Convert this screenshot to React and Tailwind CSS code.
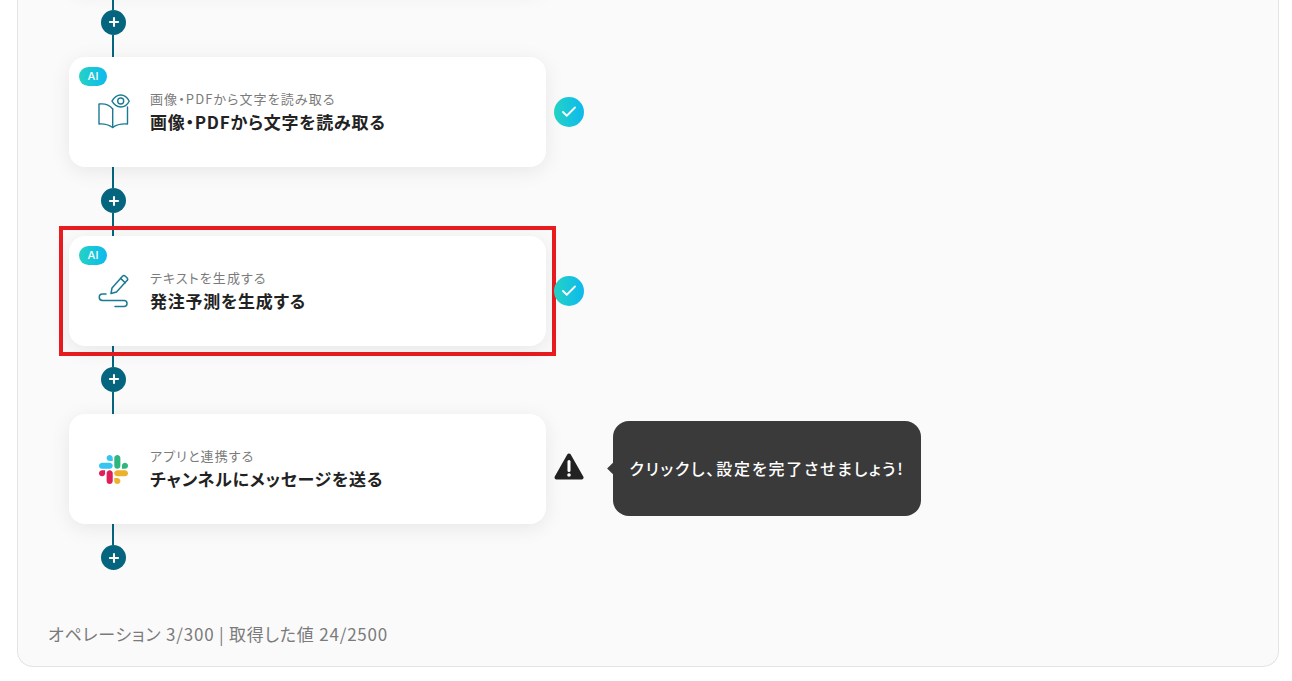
import { Check, Plus } from 'lucide-react';

const BookEyeIcon = () => (
  <svg width="32" height="35" viewBox="0 0 32 35" fill="none" stroke="#1b7a93" strokeWidth="1.4" strokeLinejoin="round" strokeLinecap="round">
    <path d="M14.7 15C12 11.5 7 9.3 1 10V30C7 29.5 11 31 14.7 33.5C18 31 23 29.5 29.5 30V13" />
    <path d="M14.7 15V33.5" />
    <path d="M14 7.2C16 3.5 19 1 22.7 1C26.4 1 29.4 3.5 31.2 7.2C29.4 10.7 26.4 13 22.7 13C19 13 16 10.7 14 7.2Z" fill="#fff" />
    <circle cx="22.7" cy="7" r="3" />
  </svg>
);

const PenIcon = () => (
  <svg width="32" height="35" viewBox="0 0 32 35" fill="none" stroke="#1b7a93" strokeWidth="1.5" strokeLinejoin="round" strokeLinecap="round">
    <path d="M13 20.5L14 15L24.5 3.2A2 2 0 0 1 27.3 3.2L29 4.8A2 2 0 0 1 29 7.6L18.5 19Z" />
    <path d="M22.6 5.4L27.2 9.8" />
    <path d="M8 21H4.5A3.2 3.2 0 0 0 4.5 27.5H26A3 3 0 0 1 26 33.5H17" />
  </svg>
);

const SlackIcon = () => (
  <svg width="29" height="29" viewBox="0 0 122.8 122.8" className="mt-[2px] -ml-[1px]">
    <path fill="#E01E5A" d="M25.8 77.6c0 7.1-5.8 12.9-12.9 12.9S0 84.7 0 77.6s5.8-12.9 12.9-12.9h12.9v12.9z" />
    <path fill="#E01E5A" d="M32.3 77.6c0-7.1 5.8-12.9 12.9-12.9s12.9 5.8 12.9 12.9v32.3c0 7.1-5.8 12.9-12.9 12.9s-12.9-5.8-12.9-12.9V77.6z" />
    <path fill="#36C5F0" d="M45.2 25.8c-7.1 0-12.9-5.8-12.9-12.9S38.1 0 45.2 0s12.9 5.8 12.9 12.9v12.9H45.2z" />
    <path fill="#36C5F0" d="M45.2 32.3c7.1 0 12.9 5.8 12.9 12.9s-5.8 12.9-12.9 12.9H12.9C5.8 58.1 0 52.3 0 45.2s5.8-12.9 12.9-12.9h32.3z" />
    <path fill="#2EB67D" d="M97 45.2c0-7.1 5.8-12.9 12.9-12.9s12.9 5.8 12.9 12.9-5.8 12.9-12.9 12.9H97V45.2z" />
    <path fill="#2EB67D" d="M90.5 45.2c0 7.1-5.8 12.9-12.9 12.9s-12.9-5.8-12.9-12.9V12.9C64.7 5.8 70.5 0 77.6 0s12.9 5.8 12.9 12.9v32.3z" />
    <path fill="#ECB22E" d="M77.6 97c7.1 0 12.9 5.8 12.9 12.9s-5.8 12.9-12.9 12.9-12.9-5.8-12.9-12.9V97h12.9z" />
    <path fill="#ECB22E" d="M77.6 90.5c-7.1 0-12.9-5.8-12.9-12.9s5.8-12.9 12.9-12.9h32.3c7.1 0 12.9 5.8 12.9 12.9s-5.8 12.9-12.9 12.9H77.6z" />
  </svg>
);

const WarningIcon = () => (
  <svg width="30" height="30" viewBox="0 0 30 30">
    <path d="M15 3.5L27.5 25.5H2.5Z" fill="#222" stroke="#222" strokeWidth="4" strokeLinejoin="round" />
    <path d="M15 9.5V18.5" stroke="#fff" strokeWidth="3" strokeLinecap="round" />
    <circle cx="15" cy="23" r="1.8" fill="#fff" />
  </svg>
);

// linea vertical + boton de agregar entre pasos
const Connector = ({ last = false }) => (
  <div className="ml-[32px] flex h-[68.5px] w-[25px] flex-col">
    <div className="ml-[11px] h-[21px] w-[2px] bg-[#05657f]" />
    <div className="flex h-[25px] w-[25px] shrink-0 items-center justify-center rounded-full bg-[#05657f]">
      <Plus size={14} strokeWidth={3.5} className="text-white" />
    </div>
    {!last && <div className="ml-[11px] flex-1 w-[2px] bg-[#05657f]" />}
  </div>
);

const AiBadge = () => (
  <span className="absolute left-[10px] top-[10px] flex h-[19px] w-[28px] items-center justify-center rounded-full bg-gradient-to-r from-[#25d2c3] to-[#0fb9ee] font-['Inter',sans-serif] text-[11px] font-medium leading-none text-white">
    AI
  </span>
);

const StepCard = ({ icon, label, title, ai, selected }) => (
  <div className="relative">
    {selected && (
      <div className="absolute -left-[10px] -right-[10px] -top-[10px] -bottom-[10px] border-4 border-[#e81c1f]" />
    )}
    <div className="relative flex h-[110px] w-[477px] items-center rounded-2xl bg-white pb-[1px] pl-[29px] shadow-[0_4px_20px_rgba(0,0,0,0.08)]">
      {ai && <AiBadge />}
      <div className="flex w-[32px] justify-center">{icon}</div>
      <div className="ml-[20px]">
        <p className="text-[13px] leading-[20px] tracking-[1.1px] text-[#7b7b7b]">{label}</p>
        <p className="mt-[1px] text-[17px] font-bold leading-[24px] tracking-[0.75px] text-[#222]">{title}</p>
      </div>
    </div>
  </div>
);

const StatusOk = () => (
  <div className="relative ml-[8px] flex h-[30px] w-[30px] items-center justify-center rounded-full bg-gradient-to-r from-[#25d2c3] to-[#0fb9ee]">
    <Check size={18} strokeWidth={2.4} className="text-white" />
  </div>
);

export default function App() {
  return (
    <div className="h-[681px] overflow-hidden bg-white pl-[17px] pr-[13px] font-['Noto_Sans_CJK_JP','Noto_Sans',sans-serif] [font-feature-settings:'palt']">
      <div className="flex h-[667px] flex-col overflow-hidden rounded-b-2xl border-x border-b border-[#e4e4e4] bg-[#fafafa] pl-[51px]">
        {/* paso anterior, solo se ve la sombra */}
        <div className="-mt-[121.5px] h-[110px] w-[477px] shrink-0 rounded-2xl bg-white shadow-[0_4px_20px_rgba(0,0,0,0.08)]" />
        <Connector />
        <div className="flex items-center">
          <StepCard ai icon={<BookEyeIcon />} label="画像・PDFから文字を読み取る" title="画像・PDFから文字を読み取る" />
          <StatusOk />
        </div>
        <Connector />
        <div className="flex items-center">
          <StepCard ai selected icon={<PenIcon />} label="テキストを生成する" title="発注予測を生成する" />
          <StatusOk />
        </div>
        <Connector />
        <div className="flex items-center">
          <StepCard icon={<SlackIcon />} label="アプリと連携する" title="チャンネルにメッセージを送る" />
          <div className="ml-[8px] -mt-[5px]">
            <WarningIcon />
          </div>
          <div className="relative ml-[29px] -mt-[2px] flex h-[95px] w-[308px] items-center justify-center rounded-2xl bg-[#3a3a3a] text-[16px] font-medium tracking-[1.8px] text-white">
            <span className="absolute -left-[4px] top-[43px] h-[9px] w-[9px] rotate-45 bg-[#3a3a3a]" />
            クリックし、設定を完了させましょう!
          </div>
        </div>
        <Connector last />
        <p className="-ml-[21px] mt-[29px] text-[17px] leading-[24px] tracking-[0.8px] text-[#7b7b7b]">
          オペレーション 3/300 | 取得した値 24/2500
        </p>
      </div>
    </div>
  );
}
